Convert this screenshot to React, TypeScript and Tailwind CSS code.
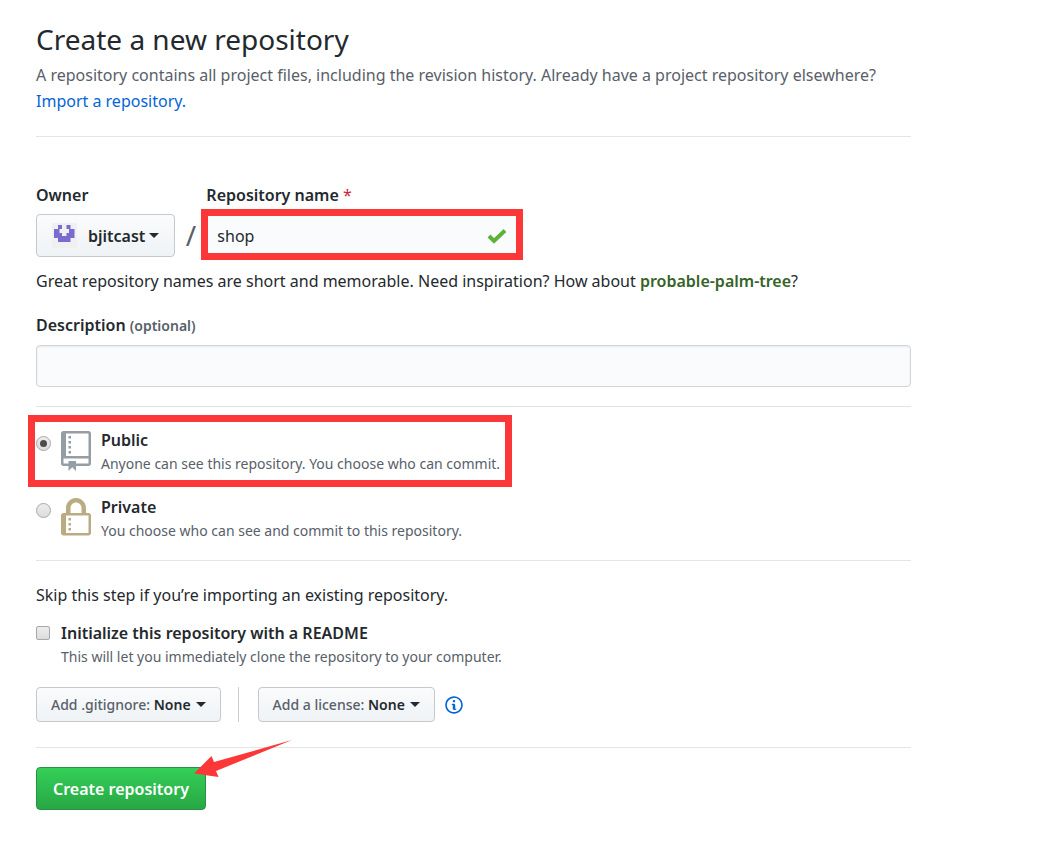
import React, { useState } from "react";

const REPO_PATH =
  "M4 9H3V8h1v1zm0-3H3v1h1V6zm0-2H3v1h1V4zm0-2H3v1h1V2zm8-1v12c0 .55-.45 1-1 1H6v2l-1.5-1.5L3 16v-2H1c-.55 0-1-.45-1-1V1c0-.55.45-1 1-1h10c.55 0 1 .45 1 1zm-1 10H1v2h2v-1h3v1h5v-2zm0-10H2v9h9V1z";
const LOCK_PATH =
  "M4 13H3v-1h1v1zm8-6v7c0 .55-.45 1-1 1H1c-.55 0-1-.45-1-1V7c0-.55.45-1 1-1h1V4c0-2.21 1.79-4 4-4s4 1.79 4 4v2h1c.55 0 1 .45 1 1zM3.8 6h4.41V4c0-1.22-.98-2.2-2.2-2.2-1.22 0-2.2.98-2.2 2.2v2H3.8zM11 7H2v7h9V7zM4 8H3v1h1V8zm0 2H3v1h1v-1z";
const INFO_PATH =
  "M6.3 5.69a.942.942 0 0 1-.28-.7c0-.28.09-.52.28-.7.19-.18.42-.28.7-.28.28 0 .52.09.7.28.18.19.28.42.28.7 0 .28-.09.52-.28.7a1 1 0 0 1-.7.3c-.28 0-.52-.11-.7-.3zM8 7.99c-.02-.25-.11-.48-.31-.69-.2-.19-.42-.3-.69-.31H6c-.27.02-.48.13-.69.31-.2.2-.3.44-.31.69h1v3c.02.27.11.5.31.69.2.2.42.31.69.31h1c.27 0 .48-.11.69-.31.2-.19.3-.42.31-.69H8V7.98v.01zM7 2.3c-3.14 0-5.7 2.54-5.7 5.68 0 3.14 2.56 5.7 5.7 5.7s5.7-2.55 5.7-5.7c0-3.15-2.56-5.69-5.7-5.69v.01zM7 .98c3.86 0 7 3.14 7 7s-3.14 7-7 7-7-3.12-7-7 3.14-7 7-7z";

const Caret = () => (
  <svg className="h-[5px] w-[10px]" viewBox="0 0 10 5" fill="currentColor" aria-hidden="true">
    <path d="M0 0h10L5 5z" />
  </svg>
);

const Identicon = () => (
  <svg className="size-[25px]" viewBox="0 0 25 25" aria-hidden="true">
    <path fill="#f0f0f0" d="M0 0h25v25H0z" />
    <path
      fill="#7a6bd0"
      d="M6 2h4v4H6zM14.500 2h4v4h-4zM2 6h5.500v4H10v3h4.500v-3H17V6h5.500v9h-4v4H6v-4H2z"
    />
  </svg>
);

interface MenuButtonProps {
  label: string;
  value: string;
}

const MenuButton: React.FC<MenuButtonProps> = ({ label, value }) => (
  <button
    type="button"
    aria-haspopup="menu"
    className="flex h-[35px] items-center gap-[5px] rounded border border-[#c5c9cd] bg-linear-to-b from-[#fafbfc] to-[#eff3f6] px-[14px] text-sm font-semibold text-[#24292e]"
  >
    <span>
      <span className="font-medium text-[#586069]">{label}</span> {value}
    </span>
    <Caret />
  </button>
);

interface VisibilityOptionProps {
  value: string;
  title: string;
  note: string;
  checked: boolean;
  onSelect: (value: string) => void;
  icon: React.ReactNode;
  highlighted?: boolean;
}

const VisibilityOption: React.FC<VisibilityOptionProps> = ({
  value,
  title,
  note,
  checked,
  onSelect,
  icon,
  highlighted,
}) => (
  <label className="relative flex w-fit items-start">
    <input
      type="radio"
      name="visibility"
      value={value}
      checked={checked}
      onChange={() => onSelect(value)}
      className="mt-2 grid size-[15px] shrink-0 appearance-none place-items-center rounded-full border border-[#a8a8a8] bg-linear-to-b from-[#ededed] to-[#dcdcdc] before:size-[7px] before:rounded-full checked:before:bg-[#4c4c4c]"
    />
    <span className="mt-[3px] ml-[10px] w-10">{icon}</span>
    <span>
      <span className="block leading-6 font-semibold">{title}</span>
      <span className="block text-sm leading-6 text-[#586069]">{note}</span>
    </span>
    {highlighted && (
      <span className="pointer-events-none absolute -top-[13px] -right-3 -bottom-[11px] -left-2 border-[7px] border-[#fb3737]" />
    )}
  </label>
);

const App: React.FC = () => {
  const [name, setName] = useState("shop");
  const [description, setDescription] = useState("");
  const [visibility, setVisibility] = useState("public");
  const [readme, setReadme] = useState(false);

  return (
    <div className="min-h-screen bg-white px-9 pt-[17px] pb-8 font-['Noto_Sans',sans-serif] text-base leading-[26px] text-[#24292e]">
      <form className="max-w-[875px]" onSubmit={(e) => e.preventDefault()}>
        <header className="border-b border-[#e1e4e8] pb-[22px]">
          <h1 className="text-[28px] leading-[45px]">Create a new repository</h1>
          <p className="text-[#586069]">
            A repository contains all project files, including the revision history. Already have a
            project repository elsewhere?
            <br />
            <a href="#import" className="text-[#0366d6]">
              Import a repository.
            </a>
          </p>
        </header>

        <div className="mt-[45px] flex items-end">
          <div>
            <span id="owner-label" className="block font-semibold">
              Owner
            </span>
            <button
              type="button"
              aria-haspopup="menu"
              aria-labelledby="owner-label owner-name"
              className="mt-[6px] flex h-[43px] items-center rounded border border-[#c5c9cd] bg-linear-to-b from-[#fafbfc] to-[#eff3f6] px-[15px] font-semibold"
            >
              <Identicon />
              <span id="owner-name" className="mr-1 ml-[11px]">
                bjitcast
              </span>
              <Caret />
            </button>
          </div>
          <span className="w-[31px] text-center text-[28px] leading-[43px] text-[#586069]">/</span>
          <div>
            <label htmlFor="repo-name" className="block font-semibold">
              Repository name <span className="font-normal text-[#cb2431]">*</span>
            </label>
            <div className="relative mt-[6px] w-[312px]">
              <input
                id="repo-name"
                value={name}
                onChange={(e) => setName(e.target.value)}
                className="h-[43px] w-full bg-[#fafbfc] px-[11px] outline-none"
              />
              <svg
                className="absolute top-[14px] right-[11px] h-4 w-5"
                viewBox="0 0 20 16"
                fill="none"
                stroke="#5cb338"
                strokeWidth="4"
                aria-hidden="true"
              >
                <path d="M2 8l5 5L18 2.5" />
              </svg>
              <span className="pointer-events-none absolute -inset-x-[5px] -top-[5px] -bottom-[3px] border-[7px] border-[#fb3737]" />
            </div>
          </div>
        </div>

        <p className="mt-[11px]">
          Great repository names are short and memorable. Need inspiration? How about{" "}
          <strong className="font-semibold text-[#366328]">probable-palm-tree</strong>?
        </p>

        <label htmlFor="description" className="mt-[18px] block font-semibold">
          Description <span className="text-sm text-[#586069]">(optional)</span>
        </label>
        <input
          id="description"
          value={description}
          onChange={(e) => setDescription(e.target.value)}
          className="mt-[7px] block h-[42px] w-full rounded border border-[#d1d5da] bg-[#fafbfc] px-[11px] shadow-[inset_0_1px_2px_rgba(27,31,35,0.075)] outline-none"
        />

        <div className="mt-[19px] flex flex-col gap-[19px] border-y border-[#e1e4e8] pt-[21px] pb-[17px]">
          <VisibilityOption
            value="public"
            title="Public"
            note="Anyone can see this repository. You choose who can commit."
            checked={visibility === "public"}
            onSelect={setVisibility}
            highlighted
            icon={
              <svg className="h-10 w-[30px]" viewBox="0 0 12 16" fill="#959da5" aria-hidden="true">
                <path d={REPO_PATH} />
              </svg>
            }
          />
          <VisibilityOption
            value="private"
            title="Private"
            note="You choose who can see and commit to this repository."
            checked={visibility === "private"}
            onSelect={setVisibility}
            icon={
              <svg className="h-10 w-[30px]" viewBox="0 0 12 16" fill="#b9ac83" aria-hidden="true">
                <path d={LOCK_PATH} />
              </svg>
            }
          />
        </div>

        <p className="mt-[21px]">Skip this step if you’re importing an existing repository.</p>
        <label className="mt-3 flex w-fit items-start">
          <input
            type="checkbox"
            checked={readme}
            onChange={(e) => setReadme(e.target.checked)}
            className="mt-[6px] mr-[11px] grid size-[14px] shrink-0 appearance-none place-items-center rounded-xs border border-[#a8a8a8] bg-linear-to-b from-[#ededed] to-[#dcdcdc] before:size-[7px] checked:before:bg-[#4c4c4c]"
          />
          <span>
            <span className="block font-semibold">Initialize this repository with a README</span>
            <span className="block text-sm leading-[22px] text-[#586069]">
              This will let you immediately clone the repository to your computer.
            </span>
          </span>
        </label>

        <div className="mt-[19px] flex items-center border-b border-[#e1e4e8] pb-[25px]">
          <MenuButton label="Add .gitignore:" value="None" />
          <span className="mr-[19px] ml-[17px] h-[35px] w-px bg-[#c9cdd1]" />
          <MenuButton label="Add a license:" value="None" />
          <svg
            className="ml-[10px] h-5 w-[18px]"
            viewBox="0 0 14 16"
            fill="#0366d6"
            aria-hidden="true"
          >
            <path d={INFO_PATH} />
          </svg>
        </div>

        <div className="relative mt-[19px] w-fit">
          <button
            type="submit"
            className="h-[43px] rounded border border-[#2a9144] bg-linear-to-b from-[#34d058] to-[#28a745] px-4 font-semibold text-white"
          >
            Create repository
          </button>
          <svg
            className="pointer-events-none absolute -top-[27px] left-[158px] h-[38px] w-[98px]"
            viewBox="0 0 98 38"
            fill="#fb3737"
            aria-hidden="true"
          >
            <path d="M0 33.500 17.500 16 20 22 98 0 22 31 24.500 37z" />
          </svg>
        </div>
      </form>
    </div>
  );
};

export default App;
